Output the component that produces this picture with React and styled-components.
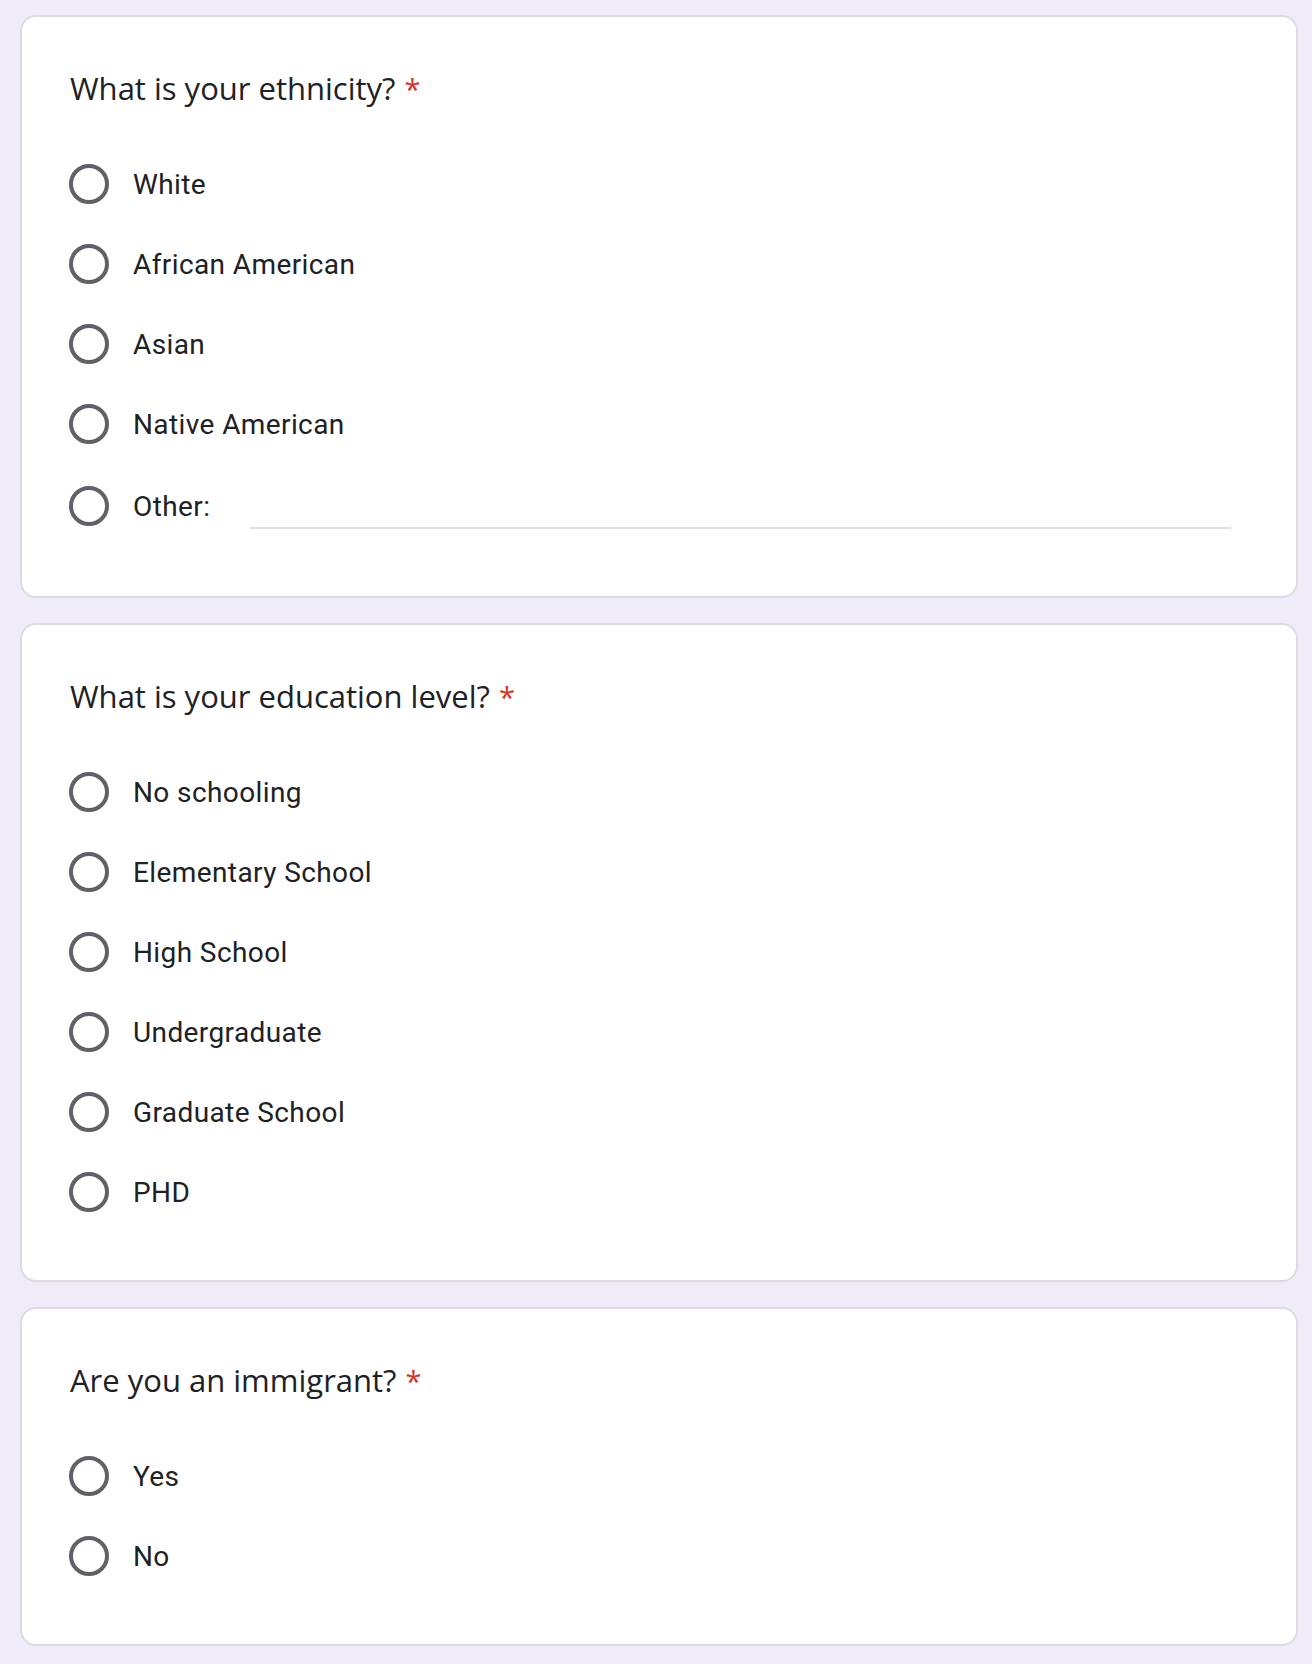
import React from "react";
import styled, { createGlobalStyle } from "styled-components";

const Global = createGlobalStyle`
  html, body { margin: 0; padding: 0; background: #f0ebf8; }
  body { font-family: Roboto, "Liberation Sans", sans-serif; }
`;

const Page = styled.div`
  display: flex;
  flex-direction: column;
  gap: 25px;
  padding: 15px 14px 18px 20px;
  background: #f0ebf8;
`;

const Card = styled.section`
  background: #ffffff;
  border: 2px solid #dadce0;
  border-radius: 16px;
  padding: 48px;
`;

const Title = styled.h2`
  margin: 0;
  font-family: "Open Sans", "Liberation Sans", sans-serif;
  font-weight: 400;
  font-size: 31px;
  line-height: 46px;
  height: 48px;
  color: #202124;
  letter-spacing: 0;
`;

const Required = styled.span`
  color: #d93025;
  margin-left: 9px;
  font-size: 29px;
`;

const Options = styled.div`
  display: flex;
  flex-direction: column;
  margin-top: 31px;
`;

const Row = styled.label`
  display: flex;
  align-items: center;
  height: ${(p) => (p.$tall ? "84px" : "80px")};
`;

const Radio = styled.span`
  box-sizing: border-box;
  width: 40px;
  height: 40px;
  flex: none;
  margin-left: -1px;
  border: 4px solid #5f6368;
  border-radius: 50%;
`;

const Label = styled.span`
  margin-left: 24px;
  font-family: Roboto, "Liberation Sans", sans-serif;
  font-size: 28px;
  letter-spacing: 0.4px;
  color: #202124;
`;

const OtherInput = styled.span`
  flex: 1;
  height: 46px;
  margin-left: 40px;
  margin-right: 17px;
  border-bottom: 2px solid #e0e0e0;
  box-sizing: border-box;
`;

const questions = [
  {
    title: "What is your ethnicity?",
    options: ["White", "African American", "Asian", "Native American"],
    other: true,
  },
  {
    title: "What is your education level?",
    options: [
      "No schooling",
      "Elementary School",
      "High School",
      "Undergraduate",
      "Graduate School",
      "PHD",
    ],
  },
  {
    title: "Are you an immigrant?",
    options: ["Yes", "No"],
  },
];

export default function App() {
  return (
    <>
      <Global />
      <Page>
        {questions.map((q) => (
          <Card key={q.title}>
            <Title>
              {q.title}
              <Required>*</Required>
            </Title>
            <Options>
              {q.options.map((o) => (
                <Row key={o}>
                  <Radio />
                  <Label>{o}</Label>
                </Row>
              ))}
              {q.other && (
                <Row $tall>
                  <Radio />
                  <Label>Other:</Label>
                  <OtherInput />
                </Row>
              )}
            </Options>
          </Card>
        ))}
      </Page>
    </>
  );
}
